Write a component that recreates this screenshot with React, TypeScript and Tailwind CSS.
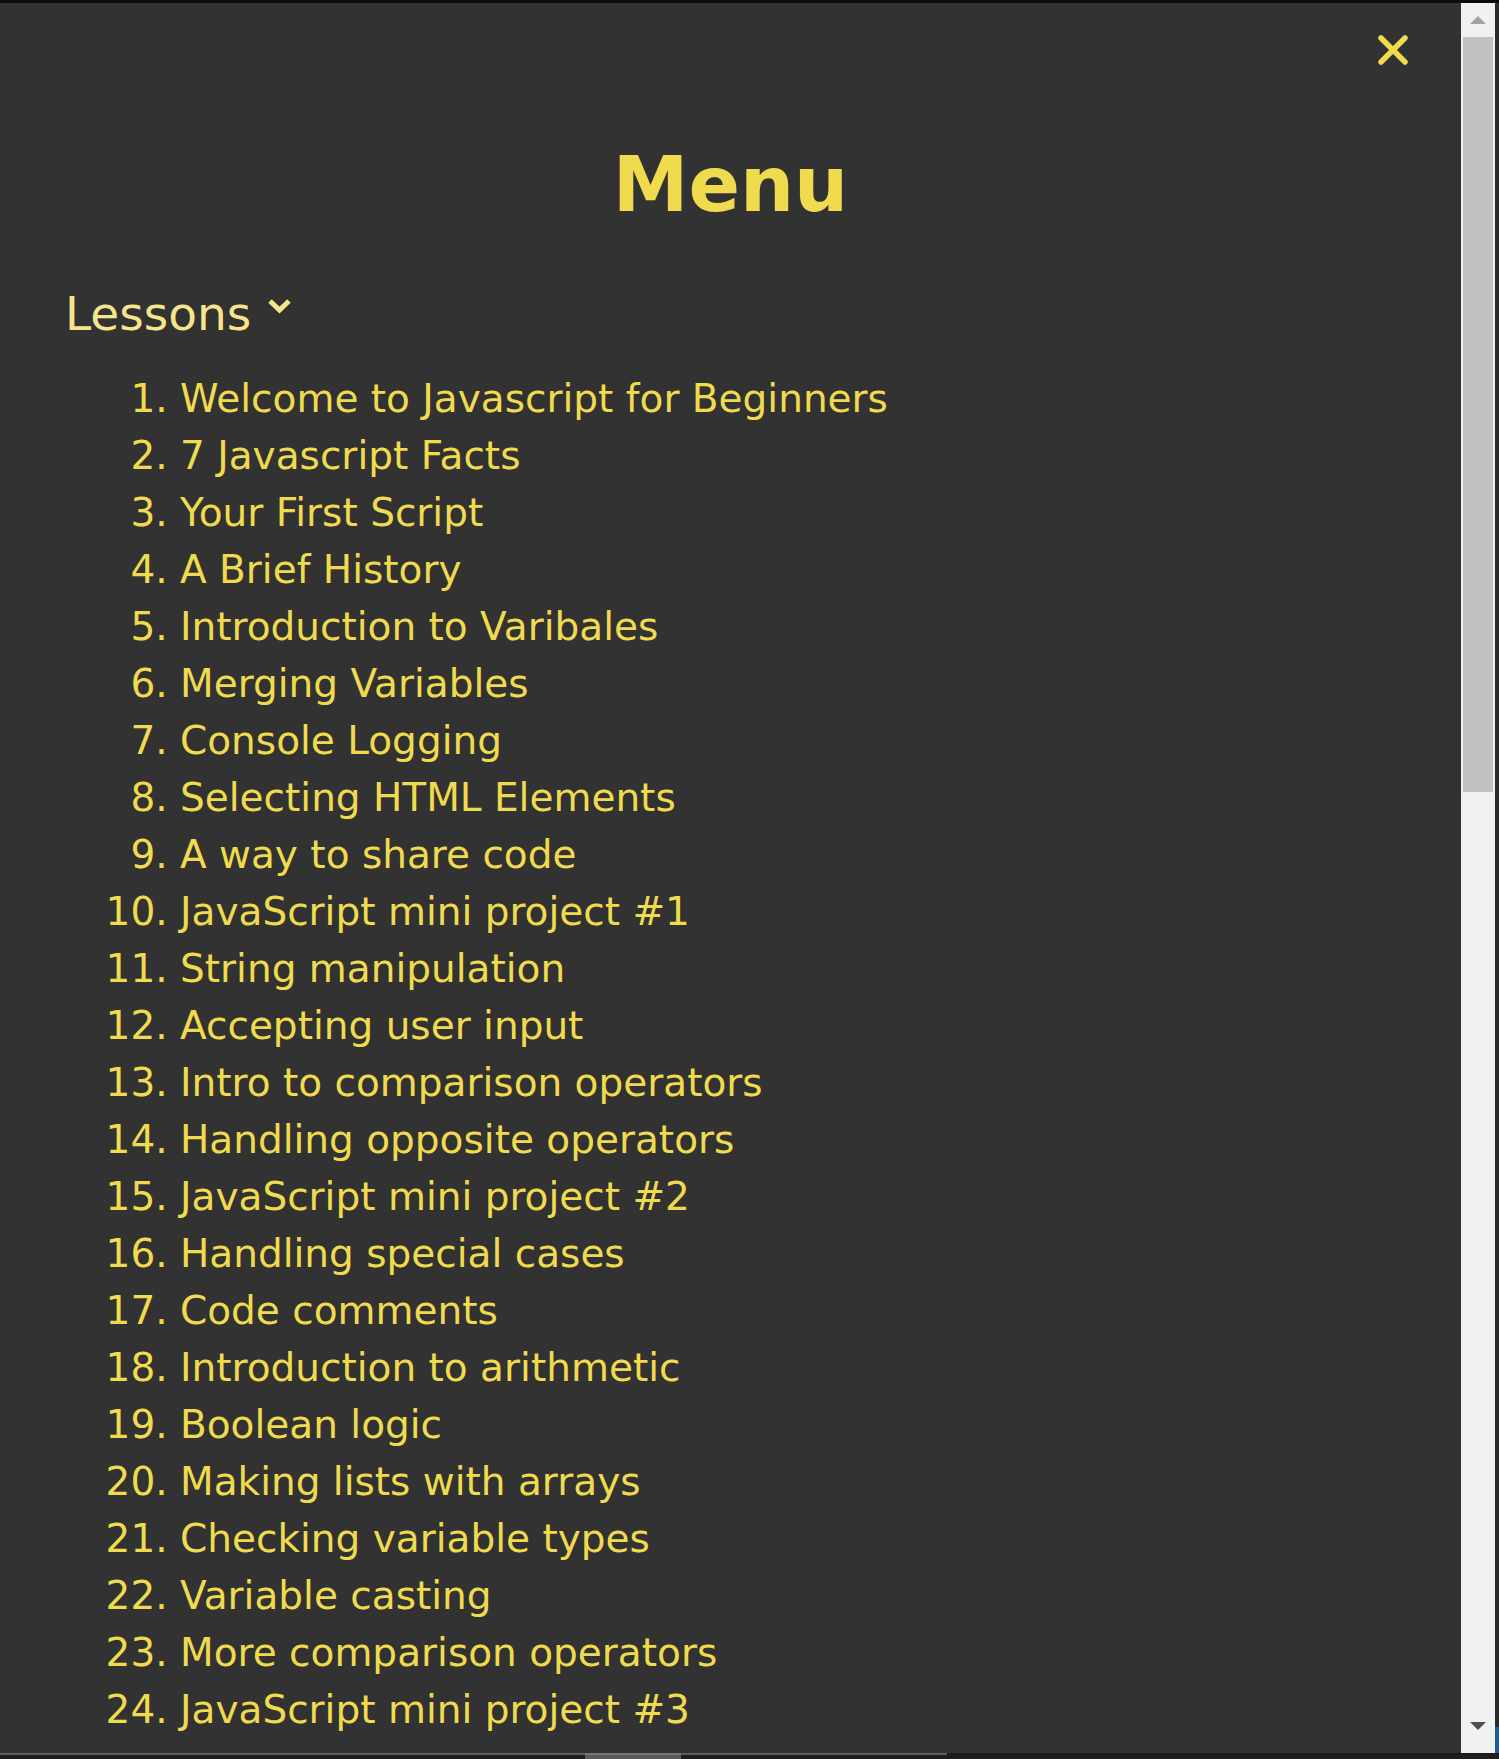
import React from "react";

const lessons: string[] = [
  "Welcome to Javascript for Beginners",
  "7 Javascript Facts",
  "Your First Script",
  "A Brief History",
  "Introduction to Varibales",
  "Merging Variables",
  "Console Logging",
  "Selecting HTML Elements",
  "A way to share code",
  "JavaScript mini project #1",
  "String manipulation",
  "Accepting user input",
  "Intro to comparison operators",
  "Handling opposite operators",
  "JavaScript mini project #2",
  "Handling special cases",
  "Code comments",
  "Introduction to arithmetic",
  "Boolean logic",
  "Making lists with arrays",
  "Checking variable types",
  "Variable casting",
  "More comparison operators",
  "JavaScript mini project #3",
];

// Fake browser scrollbar on the right edge
const ScrollBar: React.FC = () => (
  <div className="w-[34px] bg-[#f1f1f1] flex flex-col items-center">
    <div className="h-[34px] w-full flex items-center justify-center">
      <svg width="16" height="8" viewBox="0 0 16 8">
        <polygon points="0,8 8,0 16,8" fill="#a3a3a3" />
      </svg>
    </div>
    <div className="w-[30px] h-[755px] bg-[#c1c1c1]"></div>
    <div className="flex-1"></div>
    <div className="h-[34px] w-full flex items-start justify-center pt-[3px]">
      <svg width="16" height="8" viewBox="0 0 16 8">
        <polygon points="0,0 16,0 8,8" fill="#505050" />
      </svg>
    </div>
  </div>
);

const App: React.FC = () => {
  return (
    <div className="w-[1499px] h-[1759px] flex flex-col bg-[#1c1c1c] overflow-hidden font-['DejaVu_Sans',sans-serif]">
      <div className="h-[3px] bg-[#0a0a0a]"></div>

      <div className="flex h-[1750px]">
        {/* menu panel */}
        <div className="w-[1461px] bg-[#323232] overflow-hidden flex flex-col">
          <div className="flex justify-end pr-[53px] mt-[32px]">
            <button className="w-[30px] h-[30px]" aria-label="Close menu">
              <svg width="30" height="30" viewBox="0 0 30 30">
                <path d="M3 3 L27 27 M27 3 L3 27" stroke="#f0db4f" strokeWidth="5.5" strokeLinecap="round" />
              </svg>
            </button>
          </div>

          <h1 className="mt-[75px] text-center text-[76px] leading-[90px] font-bold text-[#f0db4f]">
            Menu
          </h1>

          <div className="mt-[56px] pl-[65px] flex items-start">
            <span className="text-[47px] leading-[56px] text-[#f5e68c]">Lessons</span>
            <svg className="ml-[16px] mt-[12px]" width="25" height="16" viewBox="0 0 25 16">
              <path d="M3 3 L12.5 12 L22 3" fill="none" stroke="#f5e68c" strokeWidth="5" strokeLinejoin="miter" />
            </svg>
          </div>

          <ol className="mt-[28px] pl-[180px] list-decimal text-[39px] leading-[57px] text-[#f0db4f]">
            {lessons.map((lesson, index) => (
              <li key={index}>{lesson}</li>
            ))}
          </ol>
        </div>

        <ScrollBar />

        <div className="w-[4px] flex flex-col bg-[#2b2b2b]">
          <div className="flex-1"></div>
          <div className="h-[26px] bg-[#1c5d96]"></div>
        </div>
      </div>

      {/* bottom edge */}
      <div className="h-[2px] flex">
        <div className="w-[585px] bg-[#5e5e5e]"></div>
        <div className="w-[96px] bg-[#767676]"></div>
        <div className="w-[266px] bg-[#5e5e5e]"></div>
      </div>
      <div className="flex-1 flex">
        <div className="w-[585px] bg-[#1e1e1e]"></div>
        <div className="w-[96px] bg-[#5a5a5a]"></div>
        <div className="flex-1 bg-[#1e1e1e]"></div>
      </div>
    </div>
  );
};

export default App;
